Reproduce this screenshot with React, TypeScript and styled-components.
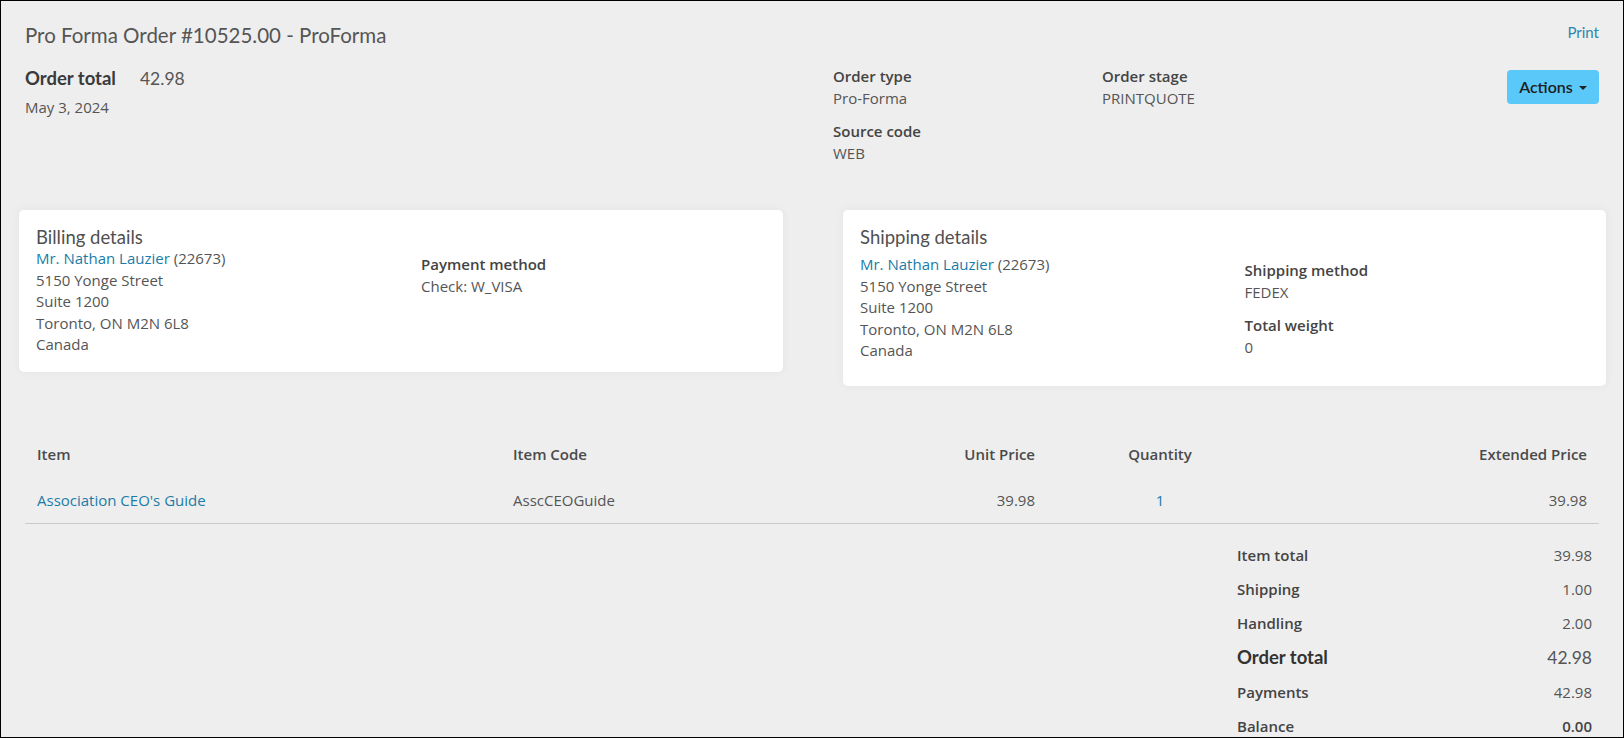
import React from "react";
import styled, { createGlobalStyle } from "styled-components";

const GlobalStyle = createGlobalStyle`
  html, body { margin: 0; padding: 0; }
  body {
    background: #eeeeee;
    font-family: "Open Sans", "Liberation Sans", sans-serif;
    font-size: 15px;
    color: #555;
  }
  * { box-sizing: border-box; }
`;

const HEAD = `"Lato", "Liberation Sans", sans-serif`;
const LINK = "#1b7ca8";

const Page = styled.div`
  height: 100vh;
  border: 1px solid #000;
  overflow: hidden;
  padding: 24px 24px 0 24px;
  background: #eeeeee;
`;

const TitleBar = styled.div`
  display: flex;
  justify-content: space-between;
  align-items: center;
  height: 20px;
`;

const Title = styled.h1`
  margin: 0;
  font-family: ${HEAD};
  font-weight: 400;
  font-size: 20.5px;
  line-height: 20px;
  color: #555;
`;

const TextLink = styled.a`
  color: ${LINK};
  text-decoration: none;
  cursor: pointer;
`;

const PrintLink = styled(TextLink)`
  font-family: ${HEAD};
  font-size: 15px;
  line-height: 20px;
  color: #2a86b1;
  margin-top: -6px;
`;

const Summary = styled.div`
  display: grid;
  grid-template-columns: 808px 538px 1fr;
  margin-top: 21px;
`;

const TotalLine = styled.div`
  display: flex;
  align-items: baseline;
  gap: 24px;
  font-family: ${HEAD};
  line-height: 24px;
`;

const TotalLabel = styled.span`
  font-size: 18.5px;
  font-weight: 700;
  color: #3a3a3a;
`;

const TotalValue = styled.span`
  font-size: 17.5px;
  font-weight: 400;
  color: #555;
`;

const DateText = styled.div`
  margin-top: 6px;
  line-height: 21px;
  color: #555;
`;

const MetaGrid = styled.div`
  display: grid;
  grid-template-columns: 269px 269px;
  align-content: start;
`;

const Field = styled.div`
  margin-bottom: 12px;
  line-height: 21.5px;
`;

const FieldLabel = styled.div`
  font-weight: 600;
  color: #444;
`;

const FieldValue = styled.div`
  color: #555;
`;

const ActionsCell = styled.div`
  display: flex;
  justify-content: flex-end;
  align-items: flex-start;
`;

const ActionsButton = styled.button`
  margin-top: 4px;
  height: 34px;
  width: 92px;
  border: none;
  border-radius: 4px;
  background: #5ac8f8;
  color: #1e1e1e;
  font-family: ${HEAD};
  font-size: 16px;
  font-weight: 600;
  display: flex;
  align-items: center;
  justify-content: center;
  gap: 6px;
  padding: 0 0 1px 0;
  cursor: pointer;
`;

const Caret = styled.span`
  width: 0;
  height: 0;
  border-left: 4px solid transparent;
  border-right: 4px solid transparent;
  border-top: 4px solid #222;
  margin-top: 2px;
`;

const Cards = styled.div`
  display: grid;
  grid-template-columns: 764px 763px;
  column-gap: 60px;
  align-items: start;
  margin: 34px -7px 0 -6px;
`;

const Card = styled.section`
  background: #fff;
  border-radius: 5px;
  box-shadow: 0 0 10px rgba(0, 0, 0, 0.05);
  padding: 16px 17px 16px 17px;
`;

const CardTitle = styled.h2`
  margin: 0;
  font-family: ${HEAD};
  font-weight: 400;
  font-size: 18.5px;
  line-height: 22px;
  color: #505050;
`;

const CardBody = styled.div<{ $shift: number }>`
  display: grid;
  grid-template-columns: 1fr 1fr;
  column-gap: 40px;
  margin-top: ${(p) => p.$shift}px;
`;

const Address = styled.div`
  line-height: 21.5px;
  color: #555;
`;

const Methods = styled.div`
  margin-top: 6px;
`;

const ItemsTable = styled.div`
  margin-top: 46px;
`;

const TableRow = styled.div<{ $head?: boolean }>`
  display: grid;
  grid-template-columns: 476px 300px 246px 226px 326px;
  line-height: 21px;
  ${(p) =>
    p.$head
      ? `font-weight: 600; color: #4a4a4a;`
      : `border-bottom: 1px solid #cbcbcb; padding-top: 1px;`}
`;

const Cell = styled.div<{ $align?: "left" | "right" | "center" }>`
  padding: 12px;
  text-align: ${(p) => p.$align || "left"};
`;

const ItemLink = styled(TextLink)``;

const QtyText = styled.span`
  color: ${LINK};
`;

const TotalsWrap = styled.div`
  display: flex;
  justify-content: flex-end;
  margin-top: 14px;
  padding-right: 7px;
`;

const Totals = styled.div`
  width: 367px;
  display: grid;
  grid-template-columns: 1fr auto;
  padding-left: 12px;
`;

const TotLabel = styled.div<{ $big?: boolean }>`
  padding: 6px 0;
  line-height: ${(p) => (p.$big ? "23px" : "22px")};
  font-weight: ${(p) => (p.$big ? 700 : 600)};
  font-family: ${(p) => (p.$big ? HEAD : "inherit")};
  font-size: ${(p) => (p.$big ? "18.5px" : "15px")};
  color: ${(p) => (p.$big ? "#333" : "#444")};
`;

const TotValue = styled.div<{ $big?: boolean; $bold?: boolean }>`
  padding: 6px 0;
  text-align: right;
  line-height: ${(p) => (p.$big ? "23px" : "22px")};
  font-family: ${(p) => (p.$big ? HEAD : "inherit")};
  font-size: ${(p) => (p.$big ? "17.5px" : "15px")};
  font-weight: ${(p) => (p.$bold ? 600 : 400)};
  color: ${(p) => (p.$bold ? "#444" : "#555")};
`;

const totals = [
  { label: "Item total", value: "39.98" },
  { label: "Shipping", value: "1.00" },
  { label: "Handling", value: "2.00" },
  { label: "Order total", value: "42.98", big: true },
  { label: "Payments", value: "42.98" },
  { label: "Balance", value: "0.00", bold: true },
];

function AddressBlock() {
  return (
    <Address>
      <div>
        <TextLink>Mr. Nathan Lauzier</TextLink> (22673)
      </div>
      <div>5150 Yonge Street</div>
      <div>Suite 1200</div>
      <div>Toronto, ON M2N 6L8</div>
      <div>Canada</div>
    </Address>
  );
}

export default function App() {
  return (
    <>
      <GlobalStyle />
      <Page>
        <TitleBar>
          <Title>Pro Forma Order #10525.00 - ProForma</Title>
          <PrintLink>Print</PrintLink>
        </TitleBar>

        <Summary>
          <div>
            <TotalLine>
              <TotalLabel>Order total</TotalLabel>
              <TotalValue>42.98</TotalValue>
            </TotalLine>
            <DateText>May 3, 2024</DateText>
          </div>
          <MetaGrid>
            <Field>
              <FieldLabel>Order type</FieldLabel>
              <FieldValue>Pro-Forma</FieldValue>
            </Field>
            <Field>
              <FieldLabel>Order stage</FieldLabel>
              <FieldValue>PRINTQUOTE</FieldValue>
            </Field>
            <Field>
              <FieldLabel>Source code</FieldLabel>
              <FieldValue>WEB</FieldValue>
            </Field>
          </MetaGrid>
          <ActionsCell>
            <ActionsButton>
              Actions <Caret />
            </ActionsButton>
          </ActionsCell>
        </Summary>

        <Cards>
          <Card>
            <CardTitle>Billing details</CardTitle>
            <CardBody $shift={0}>
              <AddressBlock />
              <Methods>
                <Field>
                  <FieldLabel>Payment method</FieldLabel>
                  <FieldValue>Check: W_VISA</FieldValue>
                </Field>
              </Methods>
            </CardBody>
          </Card>
          <Card>
            <CardTitle>Shipping details</CardTitle>
            <CardBody $shift={6}>
              <AddressBlock />
              <Methods>
                <Field>
                  <FieldLabel>Shipping method</FieldLabel>
                  <FieldValue>FEDEX</FieldValue>
                </Field>
                <Field>
                  <FieldLabel>Total weight</FieldLabel>
                  <FieldValue>0</FieldValue>
                </Field>
              </Methods>
            </CardBody>
          </Card>
        </Cards>

        <ItemsTable>
          <TableRow $head>
            <Cell>Item</Cell>
            <Cell>Item Code</Cell>
            <Cell $align="right">Unit Price</Cell>
            <Cell $align="center">Quantity</Cell>
            <Cell $align="right">Extended Price</Cell>
          </TableRow>
          <TableRow>
            <Cell>
              <ItemLink>Association CEO's Guide</ItemLink>
            </Cell>
            <Cell>AsscCEOGuide</Cell>
            <Cell $align="right">39.98</Cell>
            <Cell $align="center">
              <QtyText>1</QtyText>
            </Cell>
            <Cell $align="right">39.98</Cell>
          </TableRow>
        </ItemsTable>

        <TotalsWrap>
          <Totals>
            {totals.map((t) => (
              <React.Fragment key={t.label}>
                <TotLabel $big={t.big}>{t.label}</TotLabel>
                <TotValue $big={t.big} $bold={t.bold}>
                  {t.value}
                </TotValue>
              </React.Fragment>
            ))}
          </Totals>
        </TotalsWrap>
      </Page>
    </>
  );
}
